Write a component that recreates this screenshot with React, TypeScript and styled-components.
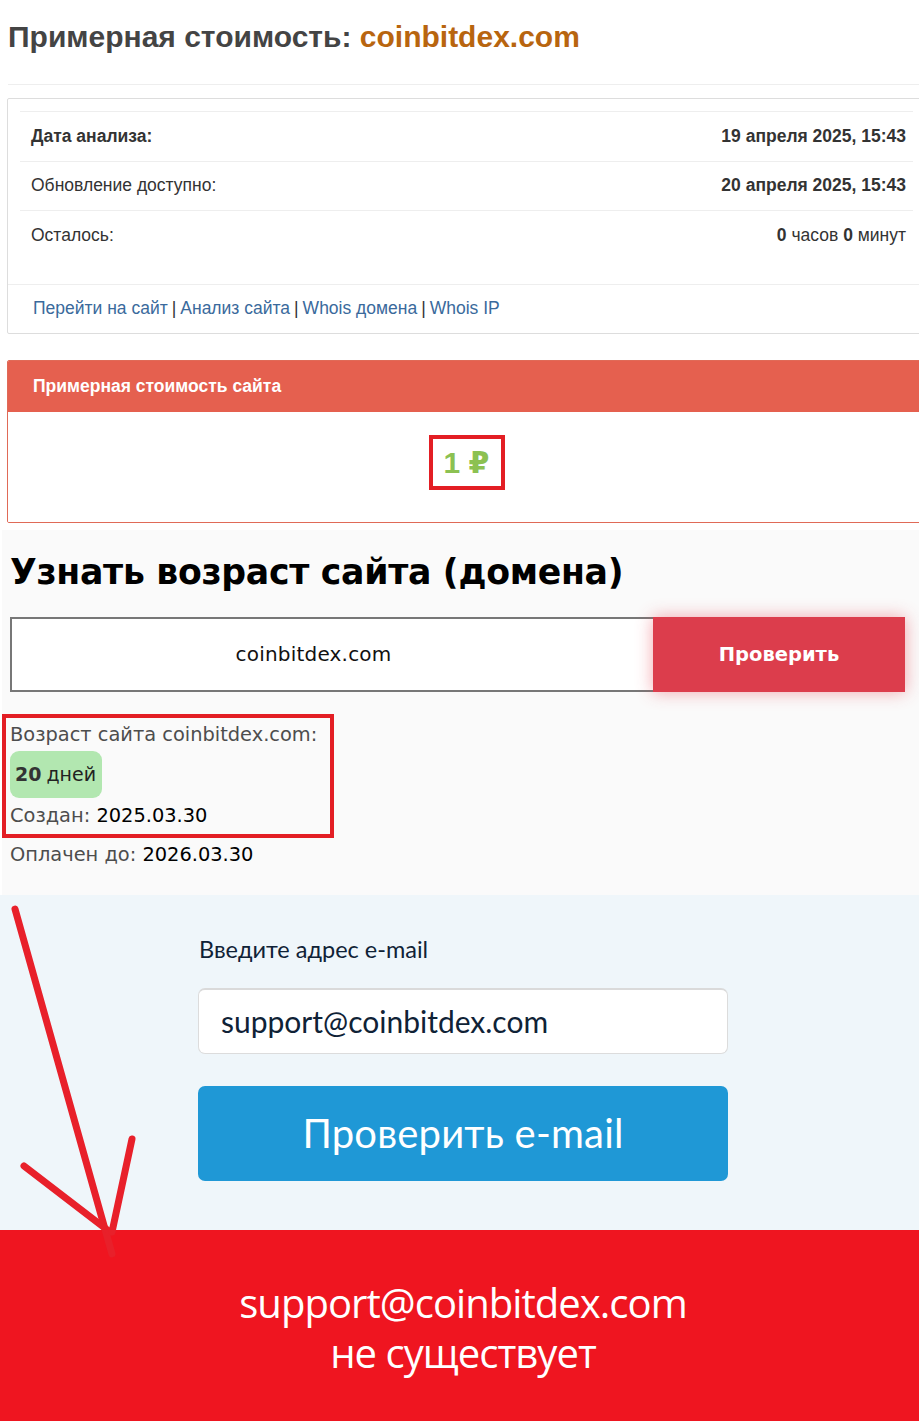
import React from "react";
import styled, { createGlobalStyle } from "styled-components";

const Global = createGlobalStyle`
  html, body { margin: 0; padding: 0; background: #ffffff; overflow-x: hidden; }
  body { font-family: "Liberation Sans", Arial, sans-serif; }
  * { box-sizing: border-box; }
`;

const Page = styled.div`
  position: relative;
  width: 926px;
  overflow: hidden;
`;

/* ---------- Section 1: estimate ---------- */
const Top = styled.section`
  background: #ffffff;
  padding: 20px 0 7px 7px;
  font-family: "Liberation Sans", Arial, sans-serif;
  color: #333333;
`;

const Title = styled.h1`
  margin: 0 0 0 1px;
  font-size: 30px;
  line-height: 34px;
  font-weight: 700;
  color: #444444;
`;

const Domain = styled.span`
  color: #b8650f;
`;

const Rule = styled.hr`
  margin: 30px 0 13px 1px;
  border: 0;
  border-top: 1px solid #eeeeee;
`;

const Panel = styled.div`
  border: 1px solid #dddddd;
  border-radius: 2px;
  background: #fff;
`;

const PanelBody = styled.div`
  padding: 12px 12px 24px 12px;
`;

const Row = styled.div`
  display: flex;
  justify-content: space-between;
  align-items: center;
  height: 49.5px;
  padding: 0 7px 0 11px;
  border-top: 1px solid #eeeeee;
  font-size: 17.5px;
`;

const Label = styled.span<{ $bold?: boolean }>`
  font-weight: ${(p) => (p.$bold ? 700 : 400)};
  color: #333;
`;

const Value = styled.span`
  color: #333;
  b { font-weight: 700; }
`;

const PanelFooter = styled.div`
  height: 49px;
  display: flex;
  align-items: center;
  padding-left: 25px;
  border-top: 1px solid #eeeeee;
  font-size: 17.5px;
  color: #333;
`;

const Link = styled.a`
  color: #3a6a9c;
  text-decoration: none;
  margin: 0 4px;
  &:first-child { margin-left: 0; }
`;

const CostPanel = styled.div`
  margin-top: 26px;
  border: 1px solid #e06a57;
  border-radius: 2px;
  overflow: hidden;
`;

const CostHead = styled.div`
  background: #e5604f;
  color: #ffffff;
  font-weight: 700;
  font-size: 17.5px;
  height: 51px;
  display: flex;
  align-items: center;
  padding-left: 25px;
`;

const CostBody = styled.div`
  height: 110px;
  display: flex;
  align-items: center;
  justify-content: center;
  padding-bottom: 8px;
  background: #fff;
`;

const PriceMark = styled.div`
  border: 4px solid #e31e24;
  width: 76px;
  height: 55px;
  display: flex;
  align-items: center;
  justify-content: center;
  color: #8cc152;
  font-weight: 700;
  font-size: 30px;
  font-family: "Liberation Sans", "DejaVu Sans", sans-serif;
`;

/* ---------- Section 2: domain age ---------- */
const Age = styled.section`
  background: #fafafa;
  margin-left: 2px;
  padding: 18px 0 26px 8px;
  font-family: "DejaVu Sans", sans-serif;
  color: #111;
`;

const AgeTitle = styled.h2`
  margin: 0;
  font-size: 34.7px;
  line-height: 48px;
  font-weight: 700;
  color: #000;
  letter-spacing: -0.3px;
`;

const CheckForm = styled.div`
  display: flex;
  margin-top: 21px;
  width: 895px;
  height: 75px;
`;

const DomainInput = styled.div`
  flex: 1;
  background: #fff;
  border: 2px solid #777;
  border-right: 0;
  display: flex;
  align-items: center;
  justify-content: center;
  padding-right: 38px;
  font-size: 20px;
  color: #111;
  letter-spacing: 0.2px;
`;

const RedButton = styled.button`
  width: 252px;
  border: 0;
  background: #dc3d4c;
  color: #fff;
  font-family: "DejaVu Sans", sans-serif;
  font-weight: 700;
  font-size: 19.5px;
  box-shadow: 0 0 16px rgba(230, 60, 75, 0.45);
`;

const ResultMark = styled.div`
  display: inline-flex;
  flex-direction: column;
  margin: 22px 0 0 -8px;
  width: 332px;
  border: 4px solid #e31e24;
  padding: 3px 0 4px 4px;
`;

const Line = styled.div`
  font-size: 19.4px;
  line-height: 28px;
  color: #4d4d4d;
  font-weight: 400;
  white-space: nowrap;
`;

const Strong = styled.span`
  color: #000;
`;

const Badge = styled.div`
  align-self: flex-start;
  background: #b2e7b0;
  border-radius: 9px;
  height: 47px;
  display: flex;
  align-items: center;
  padding: 0 6px 0 5px;
  margin: 2px 0 4px 0;
  font-size: 19px;
  color: #222;
  b { color: #333; font-weight: 700; margin-right: 5px; }
`;

const PaidLine = styled(Line)`
  margin-top: 3px;
`;

/* ---------- Section 3: email check ---------- */
const Email = styled.section`
  background: #eff6fa;
  height: 335px;
  display: flex;
  justify-content: center;
  padding-top: 39px;
  font-family: Lato, "Open Sans", sans-serif;
`;

const EmailCol = styled.div`
  width: 530px;
  display: flex;
  flex-direction: column;
`;

const EmailLabel = styled.div`
  font-size: 23.5px;
  line-height: 30px;
  color: #0f2236;
  padding-left: 1px;
`;

const EmailInput = styled.div`
  margin-top: 24px;
  height: 66px;
  background: #fff;
  border: 1px solid #dcdcdc;
  border-top: 2px solid #dadada;
  border-radius: 7px;
  display: flex;
  align-items: center;
  padding-left: 22px;
  font-size: 30px;
  color: #0f2236;
`;

const BlueButton = styled.button`
  margin-top: 32px;
  height: 95px;
  border: 0;
  border-radius: 7px;
  background: #1f98d6;
  color: #fff;
  font-family: Lato, "Open Sans", sans-serif;
  font-size: 40px;
  letter-spacing: 0.2px;
`;

/* ---------- Section 4: result ---------- */
const Verdict = styled.section`
  background: #ef1520;
  height: 200px;
  display: flex;
  flex-direction: column;
  align-items: center;
  padding-top: 48px;
  color: #fff;
  font-family: "Open Sans", sans-serif;
  font-size: 40px;
  line-height: 50px;
  letter-spacing: -0.95px;
`;

const ArrowLayer = styled.svg`
  position: absolute;
  left: 0;
  top: 0;
  pointer-events: none;
`;

export default function App() {
  return (
    <Page>
      <Global />
      <Top>
        <Title>
          Примерная стоимость: <Domain>coinbitdex.com</Domain>
        </Title>
        <Rule />
        <Panel>
          <PanelBody>
            <Row>
              <Label $bold>Дата анализа:</Label>
              <Value><b>19 апреля 2025, 15:43</b></Value>
            </Row>
            <Row>
              <Label>Обновление доступно:</Label>
              <Value><b>20 апреля 2025, 15:43</b></Value>
            </Row>
            <Row>
              <Label>Осталось:</Label>
              <Value><b>0</b> часов <b>0</b> минут</Value>
            </Row>
          </PanelBody>
          <PanelFooter>
            <Link href="#">Перейти на сайт</Link>|
            <Link href="#">Анализ сайта</Link>|
            <Link href="#">Whois домена</Link>|
            <Link href="#">Whois IP</Link>
          </PanelFooter>
        </Panel>
        <CostPanel>
          <CostHead>Примерная стоимость сайта</CostHead>
          <CostBody>
            <PriceMark>1 ₽</PriceMark>
          </CostBody>
        </CostPanel>
      </Top>

      <Age>
        <AgeTitle>Узнать возраст сайта (домена)</AgeTitle>
        <CheckForm>
          <DomainInput>coinbitdex.com</DomainInput>
          <RedButton>Проверить</RedButton>
        </CheckForm>
        <ResultMark>
          <Line>Возраст сайта coinbitdex.com:</Line>
          <Badge><b>20</b>дней</Badge>
          <Line>Создан: <Strong>2025.03.30</Strong></Line>
        </ResultMark>
        <PaidLine>Оплачен до: <Strong>2026.03.30</Strong></PaidLine>
      </Age>

      <Email>
        <EmailCol>
          <EmailLabel>Введите адрес e-mail</EmailLabel>
          <EmailInput>support@coinbitdex.com</EmailInput>
          <BlueButton>Проверить e-mail</BlueButton>
        </EmailCol>
      </Email>

      <Verdict>
        <div>support@coinbitdex.com</div>
        <div>не существует</div>
      </Verdict>

      <ArrowLayer width="200" height="1300" viewBox="0 0 200 1300">
        <g stroke="#e8202a" strokeWidth="7" strokeLinecap="round" fill="none">
          <line x1="15" y1="909" x2="112" y2="1254" />
          <line x1="24" y1="1166" x2="110" y2="1232" />
          <line x1="132" y1="1139" x2="112" y2="1232" />
        </g>
      </ArrowLayer>
    </Page>
  );
}
